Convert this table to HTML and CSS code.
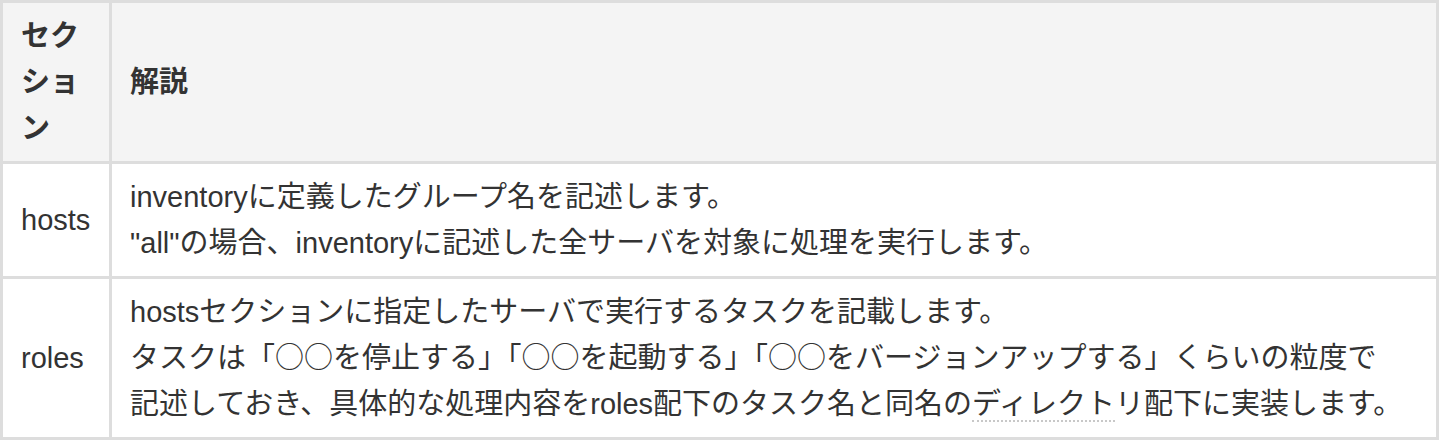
FILE: index.html
```html
<!DOCTYPE html>
<html lang="ja">
<head>
<meta charset="utf-8">
<title>セクション</title>
<link rel="stylesheet" href="styles.css">
</head>
<body>
<table class="spec">
  <thead>
    <tr>
      <th class="col-name">セクション</th>
      <th>解説</th>
    </tr>
  </thead>
  <tbody>
    <tr>
      <td class="col-name">hosts</td>
      <td>inventoryに定義したグループ名を記述します。<br>"all"の場合、inventoryに記述した全サーバを対象に処理を実行します。</td>
    </tr>
    <tr>
      <td class="col-name">roles</td>
      <td>hostsセクションに指定したサーバで実行するタスクを記載します。<br>タスクは「<span class="mark">○○</span>を停止する」「<span class="mark">○○</span>を起動する」「<span class="mark">○○</span>をバージョンアップする」くらいの粒度で<br>記述しておき、具体的な処理内容をroles配下のタスク名と同名の<span class="term">ディレクト</span>リ配下に実装します。</td>
    </tr>
  </tbody>
</table>
</body>
</html>
```

FILE: styles.css
```css
html, body {
  margin: 0;
  padding: 0;
  background: #ffffff;
}

.spec {
  width: 1439px;
  border-collapse: collapse;
  border: 3px solid #dddddd;
  font-family: "Liberation Sans", "Noto Sans CJK JP", sans-serif;
  font-size: 29px;
  line-height: 46px;
  color: #333333;
}

.spec th,
.spec td {
  border: 3px solid #dddddd;
  padding: 10px 18px;
  vertical-align: middle;
  text-align: left;
}

.spec th {
  background: #f4f4f4;
  font-weight: bold;
}

.spec .col-name {
  width: 70px;
}

.mark {
  font-family: "Noto Sans CJK JP", sans-serif;
  line-height: 1;
}

.term {
  border-bottom: 2px dotted #c8c8c8;
}
```
